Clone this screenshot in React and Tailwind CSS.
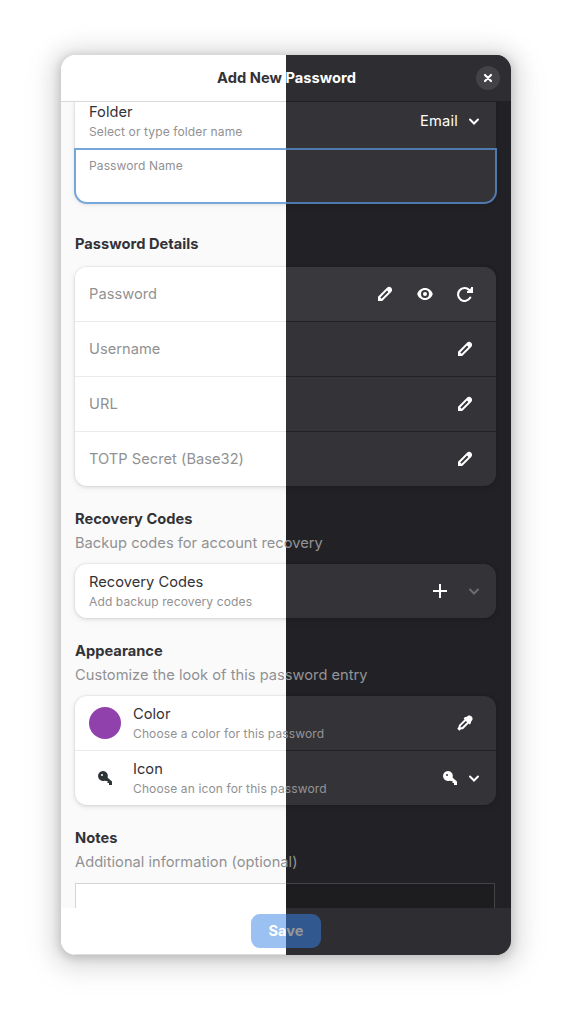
import React from "react";

const themes = {
  light: {
    view: "bg-[#fafafb] text-[#323237]",
    bar: "bg-white",
    headerLine: "border-[#dadadb]",
    footerLine: "border-[#dedede]",
    card: "bg-white shadow-[0_0_0_1px_rgba(0,0,6,0.03),0_1px_3px_1px_rgba(0,0,6,0.07),0_2px_6px_2px_rgba(0,0,6,0.03)]",
    firstRow: "bg-white",
    line: "border-[#ebebec]",
    dim: "text-[#919193]",
    focus: "outline-[#76a7da]",
    close: "bg-[#ebebec]",
    area: "bg-white border-[#d5d5d6]",
    save: "bg-[#9ac1f1] text-white",
    iconColor: "text-[#2e3436]",
    muted: "text-[#96969a]",
  },
  dark: {
    view: "bg-[#222226] text-white",
    bar: "bg-[#2e2e32]",
    headerLine: "border-[#1f1f22]",
    footerLine: "border-[#2e2e32]",
    card: "bg-[#343438] shadow-[0_0_0_1px_rgba(0,0,6,0.03),0_1px_3px_1px_rgba(0,0,6,0.07),0_2px_6px_2px_rgba(0,0,6,0.03)]",
    firstRow: "bg-[#39393d]",
    line: "border-[#222226]",
    dim: "text-[#949496]",
    focus: "outline-[#5079b0]",
    close: "bg-[#434347]",
    area: "bg-[#1d1d1f] border-[#444447]",
    save: "bg-[#31598f] text-[#979798]",
    iconColor: "text-white",
    muted: "text-[#6c6c70]",
  },
};

function Icon({ children, className = "" }) {
  return (
    <svg viewBox="0 0 16 16" className={`size-4 shrink-0 ${className}`} fill="currentColor">
      {children}
    </svg>
  );
}

const Pencil = () => (
  <Icon>
    <path
      fillRule="evenodd"
      d="M1 15v-4.200L10 1.700C11.200.5 13 .5 14.200 1.700s1.200 3.100 0 4.300L5.200 15ZM3.300 11.400l1.300 1.300 6.800-6.700-1.400-1.400Z"
    />
  </Icon>
);

const Eye = () => (
  <Icon>
    <path
      fillRule="evenodd"
      d="M8 2C4.400 2 1.300 4.400.2 8c1.100 3.600 4.200 6 7.800 6s6.700-2.400 7.800-6C14.700 4.400 11.600 2 8 2Zm0 2a4 4 0 1 1 0 8 4 4 0 0 1 0-8Z"
    />
    <circle cx="8" cy="8" r="2" />
  </Icon>
);

const Refresh = () => (
  <Icon>
    <path d="M13.300 11.600A6.500 6.500 0 1 1 12.300 4" fill="none" stroke="currentColor" strokeWidth="2.100" strokeLinecap="round" />
    <path d="M16 1v6h-6V5.300L11.300 4.800 14 2V1Z" />
  </Icon>
);

const Key = ({ className }) => (
  <Icon className={className}>
    <path
      fillRule="evenodd"
      d="M6 1a5 5 0 1 0 1.700 9.700L9 11h1.500v2H12v2h3v-3.500L10.700 7.700A5 5 0 0 0 6 1ZM5 4a1 1 0 1 1 0 2 1 1 0 0 1 0-2Z"
    />
  </Icon>
);

const Dropper = () => (
  <Icon>
    <path
      fillRule="evenodd"
      d="M12.300.4C11.100.4 10.200 1 9.300 2.100L8 2 6.600 3.400l.9 1L2 9.900 1.400 12.300.3 13.700 2.300 15.700l1.400-1.100 2.500-.6 5.400-5.500 1 .9L14 8l-.1-1.300c1.100-1 1.700-1.800 1.700-3C15.600 1.900 14.100.4 12.300.4ZM8.800 5.900l1.300 1.300-4.900 4.900-1.700.4.4-1.700Z"
    />
  </Icon>
);

const Chevron = ({ className }) => (
  <Icon className={className}>
    <path d="m4 6.500 4 4 4-4" fill="none" stroke="currentColor" strokeWidth="2" strokeLinecap="round" />
  </Icon>
);

const Plus = () => (
  <Icon>
    <path d="M7 1h2v6h6v2H9v6H7V9H1V7h6Z" />
  </Icon>
);

function Titles({ t, title, subtitle }) {
  return (
    <div className="flex grow flex-col pb-px">
      <span className="h-[21px] leading-[21px]">{title}</span>
      <span className={`h-[17px] text-[12.03px] leading-[17px] tracking-[0.115px] ${t.dim}`}>{subtitle}</span>
    </div>
  );
}

function Heading({ t, title, subtitle }) {
  return (
    <div className="flex flex-col leading-[24px]">
      <h2 className="font-bold">{title}</h2>
      {subtitle && <p className={t.dim}>{subtitle}</p>}
    </div>
  );
}

function Field({ t, label, first, children }) {
  return (
    <div
      className={`flex items-center px-[14px] ${
        first ? `h-[54px] rounded-t-xl ${t.firstRow}` : `h-[55px] border-t ${t.line}`
      }`}
    >
      <span className={`grow ${t.dim}`}>{label}</span>
      <div className="flex gap-6 pr-[9px]">{children}</div>
    </div>
  );
}

function PasswordDialog({ t }) {
  return (
    <div className={`flex h-[900px] w-[450px] shrink-0 flex-col text-[14.667px] tracking-[0.02px] ${t.view}`}>
      <header className={`grid h-[47px] shrink-0 grid-cols-[1fr_auto_1fr] items-center border-b px-[11px] ${t.bar} ${t.headerLine}`}>
        <h1 className="col-start-2 pl-px font-bold">Add New Password</h1>
        <button className={`flex size-6 items-center justify-center justify-self-end rounded-full ${t.close}`}>
          <Icon>
            <path d="m5 5 6 6M11 5l-6 6" fill="none" stroke="currentColor" strokeWidth="2.200" strokeLinecap="round" />
          </Icon>
        </button>
      </header>

      <main className="flex min-h-0 grow flex-col overflow-hidden pr-[15px] pl-[14px]">
        <section className={`shrink-0 rounded-b-xl ${t.card}`}>
          <div className="flex h-[47px] items-start pr-[14px] pl-[14px]">
            <Titles t={t} title="Folder" subtitle="Select or type folder name" />
            <div className="flex h-[38px] items-center gap-2">
              <span className="tracking-[0.2px]">Email</span>
              <Chevron />
            </div>
          </div>
          <div className={`h-[54px] rounded-b-xl px-[14px] pt-[8px] text-[12.03px] leading-[17px] tracking-[0.115px] outline-2 outline-offset-[-1px] ${t.dim} ${t.focus}`}>
            Password Name
          </div>
        </section>

        <section className="mt-[29px] flex shrink-0 flex-col gap-[11px]">
          <Heading t={t} title="Password Details" />
          <div className={`rounded-xl ${t.card}`}>
            <Field t={t} label="Password" first>
              <Pencil />
              <Eye />
              <Refresh />
            </Field>
            <Field t={t} label="Username"><Pencil /></Field>
            <Field t={t} label="URL"><Pencil /></Field>
            <Field t={t} label="TOTP Secret (Base32)"><Pencil /></Field>
          </div>
        </section>

        <section className="mt-[21px] flex shrink-0 flex-col gap-[9px]">
          <Heading t={t} title="Recovery Codes" subtitle="Backup codes for account recovery" />
          <div className={`flex h-[54px] items-center rounded-xl px-[14px] ${t.card}`}>
            <Titles t={t} title="Recovery Codes" subtitle="Add backup recovery codes" />
            <div className="flex gap-[18px]">
              <Plus />
              <Chevron className={t.muted} />
            </div>
          </div>
        </section>

        <section className="mt-[21px] flex shrink-0 flex-col gap-[9px]">
          <Heading t={t} title="Appearance" subtitle="Customize the look of this password entry" />
          <div className={`rounded-xl ${t.card}`}>
            <div className="flex h-[54px] items-center gap-3 px-[14px]">
              <div className="size-8 rounded-full bg-[#9141ac]" />
              <Titles t={t} title="Color" subtitle="Choose a color for this password" />
              <div className="pr-[9px]"><Dropper /></div>
            </div>
            <div className={`flex h-[55px] items-center gap-3 border-t px-[14px] ${t.line}`}>
              <div className="flex w-8 justify-center"><Key className={t.iconColor} /></div>
              <Titles t={t} title="Icon" subtitle="Choose an icon for this password" />
              <div className="flex gap-2">
                <Key />
                <Chevron />
              </div>
            </div>
          </div>
        </section>

        <section className="mt-[21px] flex shrink-0 flex-col gap-[9px]">
          <Heading t={t} title="Notes" subtitle="Additional information (optional)" />
          <div className={`mr-px h-[120px] border ${t.area}`} />
        </section>
      </main>

      <footer className={`flex h-[47px] shrink-0 items-start justify-center border-b pt-[6px] ${t.bar} ${t.footerLine}`}>
        <button className={`h-[34px] w-[70px] rounded-[9px] font-bold ${t.save}`}>Save</button>
      </footer>
    </div>
  );
}

export default function App() {
  return (
    <div className="flex h-[1022px] w-[572px] bg-white pt-[55px] pl-[61px] font-['Inter',sans-serif] antialiased">
      <div className="flex h-[900px] w-[450px] overflow-hidden rounded-[15px] shadow-[0_2px_8px_2px_rgba(0,0,0,0.15),0_3px_20px_10px_rgba(0,0,0,0.09),0_6px_32px_16px_rgba(0,0,0,0.04)]">
        <div className="flex w-[225px] shrink-0 justify-start overflow-hidden">
          <PasswordDialog t={themes.light} />
        </div>
        <div className="flex w-[225px] shrink-0 justify-end overflow-hidden">
          <PasswordDialog t={themes.dark} />
        </div>
      </div>
    </div>
  );
}
